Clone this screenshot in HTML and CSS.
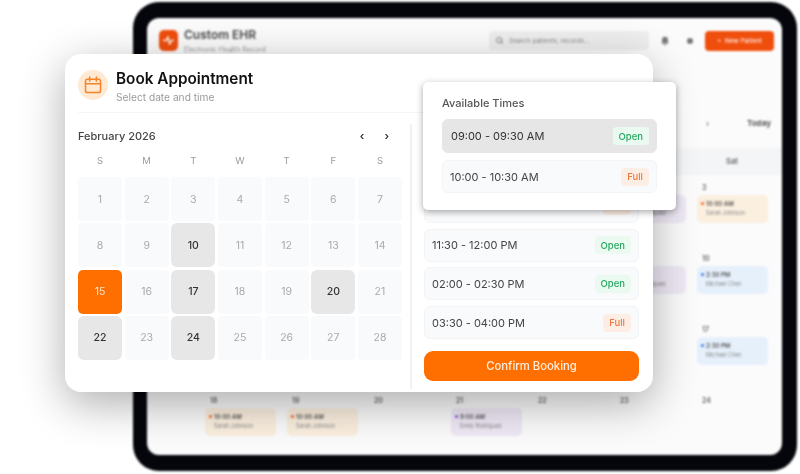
FILE: index.html
```html
<!DOCTYPE html>
<html lang="en">
<head>
  <meta charset="UTF-8">
  <meta name="viewport" content="width=device-width, initial-scale=1">
  <title>Book Appointment</title>
  <link rel="stylesheet" href="styles.css">
</head>
<body>

  <div class="stage">

    <!-- tablet behind the dialog -->
    <div class="tablet">
      <div class="screen">
        <div class="topbar">
          <div class="brand-icon">
            <svg viewBox="0 0 24 24" width="13" height="13" fill="none" stroke="#fff" stroke-width="2.4" stroke-linecap="round" stroke-linejoin="round"><path d="M3 12h5l3-7 3 14 3-7h4"/></svg>
          </div>
          <div class="brand">
            <div class="brand-name">Custom EHR</div>
            <div class="brand-sub">Electronic Health Record</div>
          </div>
          <div class="search">
            <svg viewBox="0 0 24 24" width="9" height="9" fill="none" stroke="#777" stroke-width="2.4" stroke-linecap="round"><circle cx="11" cy="11" r="7"/><path d="M16 16l5 5"/></svg>
            Search patients, records...
          </div>
          <svg class="bell" viewBox="0 0 24 24" width="10" height="10" fill="#777"><path d="M12 2a7 7 0 0 0-7 7v6l-2 3h18l-2-3V9a7 7 0 0 0-7-7zM9 20a3 3 0 0 0 6 0z"/></svg>
          <div class="top-dot"></div>
          <div class="new-patient">+ &nbsp;New Patient</div>
        </div>

        <div class="cal-toolbar">
          <span>›</span>
          <b>Today</b>
        </div>

        <div class="week-head">
          <span>Sun</span><span>Mon</span><span>Tue</span><span>Wed</span><span>Thu</span><span>Fri</span><span>Sat</span>
        </div>

        <div class="month">
          <div class="day">28</div><div class="day">29</div><div class="day">30</div><div class="day">31</div><div class="day">1</div>
          <div class="day">2<div class="event purple"><i></i>9:00 AM<small>Emily Rodriguez</small></div></div>
          <div class="day">3<div class="event orange"><i></i>10:00 AM<small>Sarah Johnson</small></div></div>

          <div class="day">4</div><div class="day">5</div><div class="day">6</div><div class="day">7</div><div class="day">8</div>
          <div class="day">9<div class="event purple"><i></i>9:00 AM<small>Emily Rodriguez</small></div></div>
          <div class="day">10<div class="event blue"><i></i>2:30 PM<small>Michael Chen</small></div></div>

          <div class="day">11</div><div class="day">12</div><div class="day">13</div><div class="day">14</div><div class="day">15</div><div class="day">16</div>
          <div class="day">17<div class="event blue"><i></i>2:30 PM<small>Michael Chen</small></div></div>

          <div class="day">18<div class="event orange"><i></i>10:00 AM<small>Sarah Johnson</small></div></div>
          <div class="day">19<div class="event orange"><i></i>10:00 AM<small>Sarah Johnson</small></div></div>
          <div class="day">20</div>
          <div class="day">21<div class="event purple"><i></i>9:00 AM<small>Emily Rodriguez</small></div></div>
          <div class="day">22</div><div class="day">23</div><div class="day">24</div>
        </div>
      </div>
    </div>

    <!-- booking dialog -->
    <div class="dialog">
      <div class="dialog-head">
        <div class="head-icon">
          <svg viewBox="0 0 24 24" width="20" height="20" fill="none" stroke="#f5852b" stroke-width="1.8" stroke-linecap="round" stroke-linejoin="round"><rect x="3" y="5" width="18" height="16" rx="2.5"/><path d="M8 2.5v5M16 2.5v5M3 10.5h18"/></svg>
        </div>
        <div class="head-text">
          <h1>Book Appointment</h1>
          <p>Select date and time</p>
        </div>
      </div>

      <div class="dialog-body">
        <div class="picker">
          <div class="picker-head">
            <span class="month-name">February 2026</span>
            <div class="arrows"><span>‹</span><span>›</span></div>
          </div>
          <div class="weekdays">
            <span>S</span><span>M</span><span>T</span><span>W</span><span>T</span><span>F</span><span>S</span>
          </div>
          <div class="dates">
            <div class="date">1</div><div class="date">2</div><div class="date">3</div><div class="date">4</div><div class="date">5</div><div class="date">6</div><div class="date">7</div>
            <div class="date">8</div><div class="date">9</div><div class="date has-slots">10</div><div class="date">11</div><div class="date">12</div><div class="date">13</div><div class="date">14</div>
            <div class="date selected">15</div><div class="date">16</div><div class="date has-slots">17</div><div class="date">18</div><div class="date">19</div><div class="date has-slots">20</div><div class="date">21</div>
            <div class="date has-slots">22</div><div class="date">23</div><div class="date has-slots">24</div><div class="date">25</div><div class="date">26</div><div class="date">27</div><div class="date">28</div>
          </div>
        </div>

        <div class="times">
          <div class="times-title">Available Times</div>
          <div class="slot">09:00 - 09:30 AM <span class="badge open">Open</span></div>
          <div class="slot">10:30 - 11:00 AM <span class="badge full">Full</span></div>
          <div class="slot">11:30 - 12:00 PM <span class="badge open">Open</span></div>
          <div class="slot">02:00 - 02:30 PM <span class="badge open">Open</span></div>
          <div class="slot">03:30 - 04:00 PM <span class="badge full">Full</span></div>
          <button class="confirm">Confirm Booking</button>
        </div>
      </div>
    </div>

    <!-- times card floating over the dialog -->
    <div class="popover">
      <div class="popover-title">Available Times</div>
      <div class="slot picked">09:00 - 09:30 AM <span class="badge open">Open</span></div>
      <div class="slot">10:00 - 10:30 AM <span class="badge full">Full</span></div>
    </div>

  </div>

</body>
</html>
```

FILE: styles.css
```css
/* Basic Reset */
* { margin: 0; padding: 0; box-sizing: border-box; }
body {
  font-family: 'Inter', 'Liberation Sans', sans-serif;
  background: #fff;
  overflow: hidden;
}
.stage {
  position: relative;
  width: 800px;
  height: 474px;
  overflow: hidden;
}

/* Tablet */
.tablet {
  position: absolute;
  left: 133px;
  top: 2px;
  width: 664px;
  height: 469px;
  padding: 16px 15px 16px 14px;
  background: #05060c;
  border-radius: 26px;
  filter: blur(1.2px);
}
.screen {
  height: 100%;
  background: #fbfbfc;
  border-radius: 12px;
  overflow: hidden;
}
.topbar {
  display: flex;
  align-items: center;
  gap: 6px;
  padding: 9px 8px 0 12px;
}
.brand-icon {
  width: 19px;
  height: 21px;
  background: #f04e0c;
  border-radius: 5px;
  display: flex;
  align-items: center;
  justify-content: center;
}
.brand { flex: 1; }
.brand-name { font-size: 12px; font-weight: 600; color: #444; }
.brand-sub { font-size: 7px; color: #999; margin-top: 3px; }
.search {
  display: flex;
  align-items: center;
  gap: 5px;
  width: 160px;
  height: 19px;
  margin-right: 5px;
  padding-left: 6px;
  background: #eeeeef;
  border-radius: 4px;
  font-size: 6.5px;
  color: #888;
}
.bell { margin-right: 11px; }
.top-dot {
  width: 6px;
  height: 6px;
  margin-right: 6px;
  background: #777;
  border-radius: 50%;
}
.new-patient {
  width: 69px;
  height: 20px;
  background: #f04e0c;
  border-radius: 4px;
  color: #fff;
  font-size: 6.5px;
  line-height: 20px;
  text-align: center;
}
.cal-toolbar {
  display: flex;
  justify-content: flex-end;
  gap: 38px;
  margin-top: 64px;
  padding-right: 11px;
  font-size: 8px;
  color: #555;
}
.week-head, .month {
  display: grid;
  grid-template-columns: repeat(7, 82px);
  margin-left: 52px;
}
.week-head {
  margin-top: 20px;
  background: #f4f5f6;
  height: 27px;
  line-height: 27px;
  font-size: 7.5px;
  font-weight: 600;
  text-align: center;
  color: #666;
}
.month {
  grid-auto-rows: 71px;
  margin-top: 8px;
}
.day {
  padding-left: 6px;
  text-indent: 5px;
  font-size: 7px;
  font-weight: 600;
  color: #666;
}
.event {
  position: relative;
  width: 71px;
  height: 28px;
  margin-top: 3px;
  padding: 5px 0 0 9px;
  border-radius: 5px;
  text-indent: 0;
  font-size: 6px;
  color: #555;
}
.event small {
  display: block;
  margin-top: 3px;
  font-size: 5.5px;
  font-weight: 400;
  color: #888;
}
.event i {
  position: absolute;
  left: 4px;
  top: 7px;
  width: 3px;
  height: 3px;
  border-radius: 50%;
}
.orange { background: #fbefdf; }
.orange i { background: #f0651f; }
.blue { background: #e6f0fb; }
.blue i { background: #3b78e7; }
.purple { background: #efe9f6; }
.purple i { background: #8a4fe0; }

/* Dialog */
.dialog {
  position: absolute;
  left: 65px;
  top: 54px;
  width: 588px;
  height: 338px;
  background: #fff;
  border-radius: 16px;
  box-shadow: 0 12px 44px rgba(0, 0, 0, 0.32);
  filter: blur(0.3px);
}
.dialog-head {
  display: flex;
  align-items: center;
  gap: 8px;
  height: 59px;
  margin: 0 13px;
  padding-top: 3px;
  border-bottom: 1px solid #f5f5f5;
}
.head-icon {
  width: 30px;
  height: 30px;
  background: #ffe9d2;
  border-radius: 50%;
  display: flex;
  align-items: center;
  justify-content: center;
}
.head-text { padding-top: 2px; }
h1 {
  font-size: 15.3px;
  font-weight: 600;
  color: #111;
}
.dialog-head p {
  margin-top: 3px;
  font-size: 10.2px;
  color: #9a9a9f;
}
.dialog-body {
  display: flex;
  padding: 0 13px;
}
.picker {
  width: 333px;
  padding: 15px 9px 0 0;
}
.picker-head {
  display: flex;
  justify-content: space-between;
  align-items: center;
  height: 16px;
}
.month-name {
  font-size: 11px;
  font-weight: 500;
  color: #444;
}
.arrows {
  display: flex;
  gap: 20px;
  padding-right: 13px;
  font-size: 11px;
  font-weight: 600;
  color: #333;
}
.weekdays, .dates {
  display: grid;
  grid-template-columns: repeat(7, 44px);
  column-gap: 2.67px;
}
.weekdays {
  margin-top: 10px;
  height: 23px;
  font-size: 9.5px;
  line-height: 13px;
  text-align: center;
  color: #9b9b9b;
}
.dates {
  row-gap: 2.33px;
  grid-auto-rows: 44px;
}
.date {
  display: flex;
  align-items: center;
  justify-content: center;
  background: #f9fafb;
  border-radius: 4px;
  font-size: 10.5px;
  color: #aaa;
}
.has-slots {
  background: #e7e7e7;
  border-radius: 6px;
  font-weight: 500;
  color: #333;
}
.selected {
  background: #ff6f00;
  border-radius: 5px;
  color: #ffe6d0;
}
.times {
  width: 229px;
  margin-top: 11px;
  margin-left: -1px;
  padding-left: 12px;
  height: 265px;
  border-left: 2px solid #f1f1f1;
}
.times-title {
  height: 27px;
  font-size: 11px;
  font-weight: 500;
  color: #555;
}
.slot {
  display: flex;
  justify-content: space-between;
  align-items: center;
  height: 33px;
  margin-bottom: 5.75px;
  padding: 0 7px;
  background: #f9fafc;
  border: 1px solid #f3f4f6;
  border-radius: 6px;
  font-size: 11px;
  color: #444;
}
.badge {
  padding: 3.5px 6px;
  border-radius: 4px;
  font-size: 9.5px;
  font-weight: 500;
}
.open { background: #ebfaf0; color: #27a862; }
.full { background: #fdeee5; color: #f0793c; }
.confirm {
  display: block;
  width: 100%;
  height: 30px;
  margin-top: 12px;
  background: #ff6f00;
  color: #ffeedd;
  border: none;
  border-radius: 9px;
  font-family: inherit;
  font-size: 11.3px;
  font-weight: 500;
}

/* Floating card */
.popover {
  position: absolute;
  left: 423px;
  top: 82px;
  width: 253px;
  height: 128px;
  padding: 14px 19px 0;
  background: #fff;
  border-radius: 5px;
  box-shadow: 0 2px 7px rgba(0, 0, 0, 0.35);
  filter: blur(0.3px);
}
.popover-title {
  height: 23px;
  font-size: 11px;
  font-weight: 500;
  color: #555;
}
.popover .slot { margin-bottom: 7px; }
.slot.picked {
  height: 34px;
  padding-left: 8px;
  background: #e6e6e6;
  border-color: #e6e6e6;
  color: #333;
}
```
